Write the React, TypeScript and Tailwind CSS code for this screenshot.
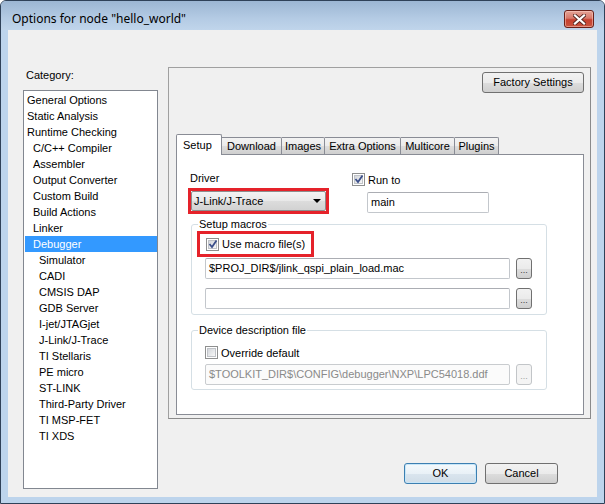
/**
 * Options dialog (IAR style) - Debugger / Setup page
 */

const categories: { label: string; level: number }[] = [
  { label: 'General Options', level: 0 },
  { label: 'Static Analysis', level: 0 },
  { label: 'Runtime Checking', level: 0 },
  { label: 'C/C++ Compiler', level: 1 },
  { label: 'Assembler', level: 1 },
  { label: 'Output Converter', level: 1 },
  { label: 'Custom Build', level: 1 },
  { label: 'Build Actions', level: 1 },
  { label: 'Linker', level: 1 },
  { label: 'Debugger', level: 1 },
  { label: 'Simulator', level: 2 },
  { label: 'CADI', level: 2 },
  { label: 'CMSIS DAP', level: 2 },
  { label: 'GDB Server', level: 2 },
  { label: 'I-jet/JTAGjet', level: 2 },
  { label: 'J-Link/J-Trace', level: 2 },
  { label: 'TI Stellaris', level: 2 },
  { label: 'PE micro', level: 2 },
  { label: 'ST-LINK', level: 2 },
  { label: 'Third-Party Driver', level: 2 },
  { label: 'TI MSP-FET', level: 2 },
  { label: 'TI XDS', level: 2 },
];

const indent = ['pl-[2px]', 'pl-[8px]', 'pl-[14px]'];

const tabs = [
  { label: 'Download', width: 'w-[60px]' },
  { label: 'Images', width: 'w-[43px]' },
  { label: 'Extra Options', width: 'w-[76px]' },
  { label: 'Multicore', width: 'w-[54px]' },
  { label: 'Plugins', width: 'w-[44px]' },
];

const btnBg =
  'bg-[linear-gradient(#f2f2f2,#ebebeb_50%,#dddddd_51%,#cfcfcf)]';

function CheckBox({ checked }: { checked: boolean }) {
  return (
    <span className="w-[13px] h-[13px] border border-[#8e8f8f] bg-white p-[1px] flex shrink-0">
      <span className="flex-1 relative border border-[#c0c3c8] bg-[linear-gradient(135deg,#d3d6db,#f7f7f7)]">
        {checked && (
          <svg
            className="absolute left-[-1px] top-[-2px]"
            width="10"
            height="10"
            viewBox="0 0 10 10"
          >
            <path
              d="M1.5 5 L4 8 L8.5 1.5"
              fill="none"
              stroke="#3b4f8a"
              strokeWidth="1.8"
            />
          </svg>
        )}
      </span>
    </span>
  );
}

function TextBox({
  value,
  className,
  disabled,
}: {
  value: string;
  className: string;
  disabled?: boolean;
}) {
  return (
    <div
      className={`h-[21px] border rounded-[2px] flex items-center pl-[3px] ${
        disabled
          ? 'border-[#c9cccf] bg-[#fbfbfb] text-[#8a8a8a]'
          : 'border-[#c3c7cc] border-t-[#abadb3] bg-white text-black'
      } ${className}`}
    >
      {value}
    </div>
  );
}

function BrowseButton({ disabled }: { disabled?: boolean }) {
  return (
    <div
      className={`w-[16px] h-[21px] ml-[6px] rounded-[3px] border flex items-end justify-center pb-[3px] text-[9px] leading-[9px] ${
        disabled
          ? 'border-[#c2c5c8] bg-[#f4f4f4] text-[#a0a0a0]'
          : `border-[#707070] ${btnBg} text-[#3b3b3b]`
      }`}
    >
      ...
    </div>
  );
}

export default function App() {
  return (
    <div className="w-[605px] h-[504px] flex flex-col bg-[#bdd4ec] border border-[#2f4158] rounded-t-[6px] overflow-hidden font-['Liberation_Sans',Arial,sans-serif] text-[11px] text-black">
      {/* Title bar */}
      <div className="h-[29px] shrink-0 flex items-start justify-between pl-[11px] pr-[10px] pt-[9px] bg-[linear-gradient(#9cb6d3,#b4cbe4_60%,#c0d5eb)]">
        <span className="mt-[1px] text-[12px] leading-[16px] font-['Noto_Sans','Liberation_Sans',sans-serif] text-black">
          Options for node "hello_world"
        </span>
        <div className="w-[30px] h-[18px] rounded-[3px] border border-[#6a2018] bg-[linear-gradient(#e4a497,#d8786a_45%,#c7402f_55%,#c8553f)] flex items-center justify-center shadow-[inset_0_0_0_1px_rgba(255,210,200,0.5)]">
          <svg width="13" height="11" viewBox="0 0 13 11">
            <path
              d="M2 1.5 L11 9.5 M11 1.5 L2 9.5"
              stroke="#5a2a24"
              strokeWidth="4"
              strokeLinecap="square"
            />
            <path
              d="M2 1.5 L11 9.5 M11 1.5 L2 9.5"
              stroke="#ffffff"
              strokeWidth="2.2"
              strokeLinecap="square"
            />
          </svg>
        </div>
      </div>

      {/* Frame + client */}
      <div className="flex-1 flex px-[7px]">
        <div className="flex-1 bg-[#f0f0f0] flex">
          {/* Category column */}
          <div className="ml-[15px] mt-[38px] w-[135px] flex flex-col">
            <div className="h-[14px] leading-[14px] pl-[3px]">Category:</div>
            <div className="mt-[8px] h-[399px] border border-[#828790] bg-white pt-[1px] pl-[1px]">
              {categories.map((c) => (
                <div
                  key={c.label}
                  className={`h-[16px] leading-[16px] whitespace-nowrap ${indent[c.level]} ${
                    c.label === 'Debugger' ? 'bg-[#3399ff] text-white' : ''
                  }`}
                >
                  {c.label}
                </div>
              ))}
            </div>
          </div>

          {/* Right column */}
          <div className="ml-[10px] mt-[37px] flex flex-col">
            <div className="w-[423px] h-[352px] border border-[#a0a0a0] border-r-[#8a8a8a] border-b-[#8a8a8a] flex flex-col pt-[4px] pl-[7px] pr-[6px] pb-[3px]">
              <div className="flex justify-end">
                <div
                  className={`w-[102px] h-[21px] rounded-[3px] border border-[#707070] ${btnBg} flex items-center justify-center`}
                >
                  Factory Settings
                </div>
              </div>

              {/* Tabs */}
              <div className="mt-[41px] flex items-end">
                <div className="relative z-10 w-[46px] h-[21px] -mb-[1px] bg-white border border-b-0 border-[#898c95] rounded-t-[2px] pl-[6px] pt-[3px] leading-[14px]">
                  Setup
                </div>
                {tabs.map((t) => (
                  <div
                    key={t.label}
                    className={`${t.width} h-[17px] border-t border-r border-[#898c95] rounded-tr-[2px] bg-[linear-gradient(#f3f3f3,#ebebeb_50%,#dddddd_51%,#cfcfcf)] flex items-center justify-center leading-[14px]`}
                  >
                    {t.label}
                  </div>
                ))}
              </div>

              {/* Tab page */}
              <div className="flex-1 border border-[#898c95] bg-white flex flex-col">
                <div className="flex pt-[16px]">
                  <div className="ml-[11px] flex flex-col">
                    <div className="pl-[2px] h-[14px] leading-[14px]">Driver</div>
                    <div className="mt-[3px] w-[141px] h-[26px] border-[3px] border-[#e5222a] flex">
                      <div className="flex-1 rounded-[2px] border border-[#8d8d8d] bg-[linear-gradient(#f3f3f3,#e8e8e8_50%,#dcdcdc_51%,#d2d2d2)] flex items-center justify-between pl-[2px] pr-[4px]">
                        <span>J-Link/J-Trace</span>
                        <svg width="8" height="4" viewBox="0 0 8 4">
                          <path d="M0 0 H8 L4 4 Z" fill="#000" />
                        </svg>
                      </div>
                    </div>
                  </div>
                  <div className="ml-[23px] mt-[2px] flex flex-col">
                    <div className="flex items-center h-[13px]">
                      <CheckBox checked />
                      <span className="ml-[3px] leading-[14px]">Run to</span>
                    </div>
                    <TextBox value="main" className="mt-[6px] ml-[15px] w-[122px]" />
                  </div>
                </div>

                {/* Setup macros */}
                <div className="relative mt-[10px] ml-[14px] w-[356px] border border-[#d5dfe5] rounded-[3px] pt-[6px] pl-[5px] pb-[5px]">
                  <span className="absolute left-[6px] -top-[8px] bg-white px-[1px] leading-[14px]">
                    Setup macros
                  </span>
                  <div className="w-[117px] h-[26px] border-[3px] border-[#e5222a] flex items-center pl-[6px]">
                    <CheckBox checked />
                    <span className="ml-[3px] leading-[14px]">Use macro file(s)</span>
                  </div>
                  <div className="mt-[1px] ml-[8px] flex items-start">
                    <TextBox value="$PROJ_DIR$/jlink_qspi_plain_load.mac" className="w-[305px]" />
                    <BrowseButton />
                  </div>
                  <div className="mt-[9px] ml-[8px] flex items-start">
                    <TextBox value="" className="w-[305px]" />
                    <BrowseButton />
                  </div>
                </div>

                {/* Device description file */}
                <div className="relative mt-[15px] ml-[14px] w-[356px] border border-[#d5dfe5] rounded-[3px] pt-[15px] pl-[13px] pb-[4px]">
                  <span className="absolute left-[6px] -top-[8px] bg-white px-[1px] leading-[14px]">
                    Device description file
                  </span>
                  <div className="flex items-center h-[13px]">
                    <CheckBox checked={false} />
                    <span className="ml-[3px] leading-[14px]">Override default</span>
                  </div>
                  <div className="mt-[5px] flex items-start">
                    <TextBox
                      value="$TOOLKIT_DIR$\CONFIG\debugger\NXP\LPC54018.ddf"
                      className="w-[305px]"
                      disabled
                    />
                    <BrowseButton disabled />
                  </div>
                </div>
              </div>
            </div>

            {/* Dialog buttons */}
            <div className="mt-[44px] ml-[236px] flex gap-[8px]">
              <div className="w-[73px] h-[21px] rounded-[3px] border border-[#3c7fb1] bg-[linear-gradient(#f4f9fc,#e9f1f7_50%,#dae5ee_51%,#d0dde8)] shadow-[inset_0_0_0_1px_#c8e6f8] flex items-center justify-center">
                OK
              </div>
              <div
                className={`w-[73px] h-[21px] rounded-[3px] border border-[#707070] ${btnBg} flex items-center justify-center`}
              >
                Cancel
              </div>
            </div>
          </div>
        </div>
      </div>
      <div className="h-[6px] shrink-0" />
    </div>
  );
}
